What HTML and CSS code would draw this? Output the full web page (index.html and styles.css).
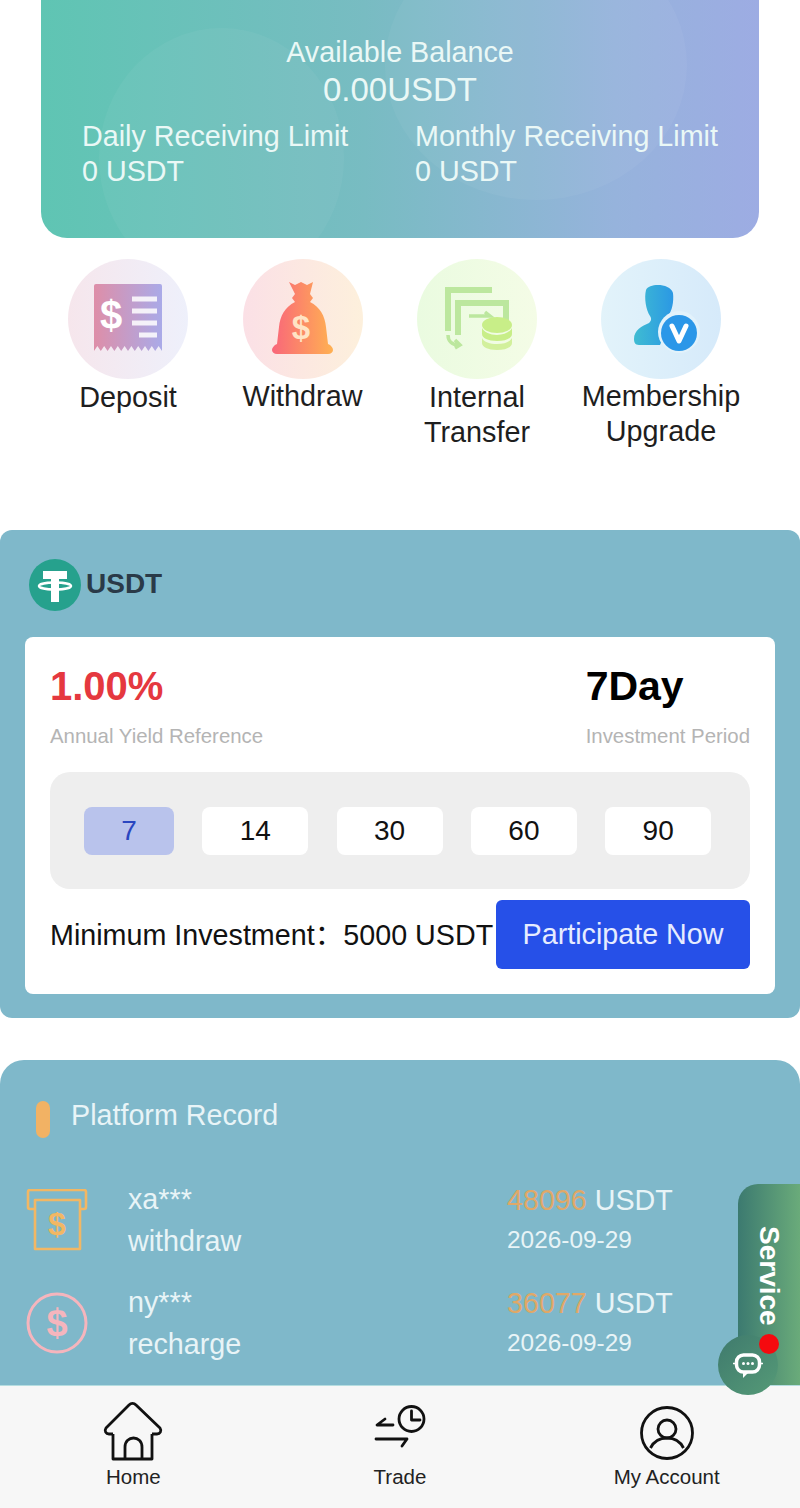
FILE: index.html
```html
<!DOCTYPE html>
<html lang="en">
<head>
  <meta charset="UTF-8" />
  <title>Wallet Home</title>
  <link rel="stylesheet" href="styles.css">
</head>
<body>
  <div class="page">
    <div class="content">
      <div class="hero">
        <div class="balance-label">Available Balance</div>
        <div class="balance-value">0.00USDT</div>
        <div class="limits">
          <div>Daily Receiving Limit<br>0 USDT</div>
          <div>Monthly Receiving Limit<br>0 USDT</div>
        </div>
      </div>

      <div class="actions">
        <div class="action action-low">
          <svg class="action-icon" viewBox="0 0 120 120">
            <defs>
              <linearGradient id="depBg"><stop offset="0" stop-color="#f6e6ec"/><stop offset="1" stop-color="#eef0fb"/></linearGradient>
              <linearGradient id="depFg"><stop offset="0" stop-color="#de8ea8"/><stop offset="1" stop-color="#aaaae8"/></linearGradient>
            </defs>
            <circle cx="60" cy="60" r="60" fill="url(#depBg)"/>
            <path d="M28 25h64a2 2 0 0 1 2 2v65l-3.400-5-3.400 5-3.400-5-3.400 5-3.400-5-3.400 5-3.400-5-3.400 5-3.400-5-3.400 5-3.400-5-3.400 5-3.400-5-3.400 5-3.400-5-3.400 5-3.400-5-3.400 5-3.400-5-3.400 5V27a2 2 0 0 1 2-2z" fill="url(#depFg)"/>
            <text class="icon-dollar" x="43" y="70" text-anchor="middle" font-size="40">$</text>
            <path d="M64 40h25M64 52h25M64 64h25M71 76h18" stroke="#fff" stroke-width="5" opacity=".85"/>
          </svg>
          <div>Deposit</div>
        </div>
        <div class="action">
          <svg class="action-icon" viewBox="0 0 120 120">
            <defs>
              <linearGradient id="wdBg"><stop offset="0" stop-color="#fbe0e6"/><stop offset="1" stop-color="#fdf0dc"/></linearGradient>
              <linearGradient id="wdFg"><stop offset="0" stop-color="#f9667a"/><stop offset="1" stop-color="#ffb152"/></linearGradient>
            </defs>
            <circle cx="60" cy="60" r="60" fill="url(#wdBg)"/>
            <g transform="translate(-2 0)">
              <path d="M48 23l6 3 6-3 6 3 6-3-3 12 3 4-3 4c10 5 15 14 16 25l2 17c3 1 5 4 5 6s-2 4-5 4H36c-3 0-5-2-5-4s2-5 5-6l2-17c1-11 6-20 16-25l-3-4 3-4z" fill="url(#wdFg)"/>
              <text class="icon-dollar dollar-peach" x="60" y="80" text-anchor="middle" font-size="33">$</text>
            </g>
          </svg>
          <div>Withdraw</div>
        </div>
        <div class="action action-lower">
          <svg class="action-icon" viewBox="0 0 120 120">
            <defs>
              <linearGradient id="trBg"><stop offset="0" stop-color="#eafbe0"/><stop offset="1" stop-color="#f4fce6"/></linearGradient>
            </defs>
            <circle cx="60" cy="60" r="60" fill="url(#trBg)"/>
            <g fill="none" stroke="#bce79e" stroke-width="6">
              <path d="M75 31H31v41"/>
              <path d="M89 62V44H41v32"/>
              <path d="M31 76c0 6 4 10 11 10M38 81l5 5-5 3" stroke-width="3.500"/>
              <path d="M52 57h20M68 53l5 4-5 0" stroke-width="3.500"/>
            </g>
            <ellipse cx="80" cy="66" rx="15" ry="8" fill="#c8ee88"/>
            <path d="M65 69v6c0 4 6 7 15 7s15-3 15-7v-6c-2 4-8 7-15 7s-13-3-15-7z" fill="#c8ee88"/>
            <path d="M65 79v5c0 4 6 7 15 7s15-3 15-7v-5c-2 4-8 6-15 6s-13-2-15-6z" fill="#d2f09c"/>
          </svg>
          <div>Internal<br>Transfer</div>
        </div>
        <div class="action">
          <svg class="action-icon" viewBox="0 0 120 120">
            <defs>
              <linearGradient id="memBg"><stop offset="0" stop-color="#e2f3fa"/><stop offset="1" stop-color="#d6eafa"/></linearGradient>
              <linearGradient id="memFg"><stop offset="0" stop-color="#3fbcd2"/><stop offset="1" stop-color="#2b98e4"/></linearGradient>
            </defs>
            <circle cx="60" cy="60" r="60" fill="url(#memBg)"/>
            <path d="M45 31c3-7 24-7 27 3 1 9-1 18-5 23-1 3 0 5 2 7l-10 22H38c-4 0-5-3-5-6 0-9 8-13 15-16 2-2 3-4 1-7-4-6-6-18-4-26z" fill="url(#memFg)"/>
            <circle cx="78" cy="73" r="21" fill="#e2f2fb"/>
            <circle cx="78" cy="74" r="18" fill="#2b97e8"/>
            <path d="M71 67l7 15 7-15" fill="none" stroke="#fff" stroke-width="5" stroke-linecap="round" stroke-linejoin="round"/>
          </svg>
          <div>Membership<br>Upgrade</div>
        </div>
      </div>

      <div class="product">
        <div class="product-head">
          <svg class="coin" viewBox="0 0 52 52">
            <circle cx="26" cy="26" r="26" fill="#26a18d"/>
            <path d="M14 12h24v8h-8v3h-8v-3h-8zM22 22h8v21h-8z" fill="#fff"/>
            <ellipse cx="26" cy="27" rx="16" ry="3.500" fill="none" stroke="#fff" stroke-width="2.500"/>
          </svg>
          <span>USDT</span>
        </div>
        <div class="product-card">
          <div class="stats">
            <div>
              <div class="stat-big red">1.00%</div>
              <div class="stat-small">Annual Yield Reference</div>
            </div>
            <div>
              <div class="stat-big stat-day">7Day</div>
              <div class="stat-small">Investment Period</div>
            </div>
          </div>
          <div class="periods">
            <div class="period period-on">7</div>
            <div class="period">14</div>
            <div class="period">30</div>
            <div class="period">60</div>
            <div class="period">90</div>
          </div>
          <div class="join">
            <div class="join-text">Minimum Investment：5000 USDT</div>
            <button class="join-btn">Participate Now</button>
          </div>
        </div>
      </div>

      <div class="records">
        <div class="records-title"><span class="pill"></span>Platform Record</div>
        <div class="record">
          <svg class="record-icon" viewBox="0 0 62 62">
            <g fill="none" stroke="#f2b764" stroke-width="2.600" stroke-linejoin="round">
              <path d="M9 20H4a2 2 0 0 1-2-2V3a2 2 0 0 1 2-2h54a2 2 0 0 1 2 2v15a2 2 0 0 1-2 2h-4"/>
              <path d="M9 11h45v49H9z"/>
            </g>
            <text class="icon-dollar dollar-orange" x="31" y="46" text-anchor="middle" font-size="32">$</text>
          </svg>
          <div class="record-who">xa***<br>withdraw</div>
          <div class="record-amt"><span class="orange">48096</span> USDT<div class="record-date">2026-09-29</div></div>
        </div>
        <div class="record">
          <svg class="record-icon" viewBox="0 0 62 62">
            <circle cx="31" cy="31" r="29" fill="none" stroke="#f5b5bd" stroke-width="3"/>
            <text class="icon-dollar dollar-pink" x="31" y="44" text-anchor="middle" font-size="38">$</text>
          </svg>
          <div class="record-who">ny***<br>recharge</div>
          <div class="record-amt"><span class="orange">36077</span> USDT<div class="record-date">2026-09-29</div></div>
        </div>
      </div>
    </div>

    <div class="nav">
      <div class="nav-item">
        <svg class="nav-icon" viewBox="0 0 64 64">
          <path d="M12 33v25h39V33M12 33H8c-3 0-5-3-3-6L28 4c2-2 5-2 7 0l24 23c2 3 0 6-3 6h-5M24 58V46c0-12 17-12 17 0v12" fill="none" stroke="#111" stroke-width="2.800" stroke-linejoin="round"/>
        </svg>
        <div>Home</div>
      </div>
      <div class="nav-item">
        <svg class="nav-icon" viewBox="0 0 64 64">
          <circle cx="43.500" cy="18" r="12.500" fill="none" stroke="#111" stroke-width="2.800"/>
          <path d="M43.500 10v9H52M25 24H9l8-6M8 38h31l-5 7" fill="none" stroke="#111" stroke-width="2.800" stroke-linecap="round" stroke-linejoin="round"/>
        </svg>
        <div>Trade</div>
      </div>
      <div class="nav-item">
        <svg class="nav-icon" viewBox="0 0 64 64">
          <circle cx="32" cy="32" r="25.500" fill="none" stroke="#111" stroke-width="2.800"/>
          <circle cx="32" cy="28" r="9" fill="none" stroke="#111" stroke-width="2.800"/>
          <path d="M15.500 47c3-6 9-10 16.500-10s13.500 4 16.500 10" fill="none" stroke="#111" stroke-width="2.800"/>
        </svg>
        <div>My Account</div>
      </div>
    </div>

    <div class="service">
      <div class="service-tab">Service</div>
      <div class="service-bot">
        <svg viewBox="0 0 30 30" width="30" height="30">
          <rect x="3.500" y="5" width="23" height="17" rx="7" fill="none" stroke="#fff" stroke-width="3.500"/>
          <path d="M0 13.500h4M26 13.500h4" stroke="#fff" stroke-width="1.500"/>
          <path d="M10 21v7l6-6z" fill="#fff"/>
          <circle cx="10.500" cy="13.500" r="1.500" fill="#fff"/>
          <circle cx="15" cy="13.500" r="1.500" fill="#fff"/>
          <circle cx="19.500" cy="13.500" r="1.500" fill="#fff"/>
        </svg>
      </div>
      <div class="service-dot"></div>
    </div>
  </div>
</body>
</html>
```

FILE: styles.css
```css
* {
  box-sizing: border-box;
}
body {
  margin: 0;
  background: #fff;
  font-family: "Liberation Sans", Arial, "Noto Sans CJK SC", sans-serif;
  color: #222;
}
.page {
  position: relative;
  height: 1508px;
  display: flex;
  flex-direction: column;
  overflow: hidden;
}
.content {
  flex: 1;
  min-height: 0;
  overflow: hidden;
}

/* balance card */
.hero {
  position: relative;
  overflow: hidden;
  height: 238px;
  margin: 0 41px;
  padding: 34px 41px 0;
  border-radius: 0 0 26px 26px;
  background: linear-gradient(90deg, #5fc5b3 0%, #78bcc2 45%, #96b3dc 80%, #9dace3 100%);
  color: #eaf8f6;
  font-size: 28.700px;
  line-height: 35px;
  text-align: center;
}
.hero::before,
.hero::after {
  content: "";
  position: absolute;
  border-radius: 50%;
  background: rgba(255, 255, 255, 0.045);
}
.hero::before {
  left: 58px;
  top: 28px;
  width: 245px;
  height: 260px;
}
.hero::after {
  left: 344px;
  top: -70px;
  width: 302px;
  height: 270px;
}
.balance-label,
.balance-value,
.limits {
  position: relative;
  z-index: 1;
}
.balance-label {
  height: 36px;
  line-height: 36px;
}
.balance-value {
  font-size: 33px;
  line-height: 40px;
}
.limits {
  display: grid;
  grid-template-columns: 333px 1fr;
  margin-top: 9px;
  text-align: left;
  white-space: nowrap;
}

/* quick actions */
.actions {
  display: grid;
  grid-template-columns: 174px 175px 174px 194px;
  margin: 21px 41px 0;
  height: 271px;
  font-size: 28.800px;
  line-height: 35px;
  text-align: center;
  color: #1e1e1e;
}
.action-icon {
  display: block;
  width: 120px;
  height: 120px;
  margin: 0 auto 0;
}
.action-low > div {
  margin-top: 1px;
}
.action-lower > div {
  margin-top: 1px;
}
.icon-dollar {
  font-family: "Liberation Sans", Arial, sans-serif;
  font-weight: 700;
  fill: #fff;
}
.dollar-peach {
  fill: #ffe3c4;
}
.dollar-orange {
  fill: #f2b764;
}
.dollar-pink {
  fill: #f5b5bd;
}

/* product card */
.product {
  height: 488px;
  padding: 0 25px;
  background: #7fb8ca;
  border-radius: 12px;
}
.product-head {
  display: flex;
  align-items: center;
  gap: 5px;
  height: 107px;
  padding: 3px 0 0 4px;
  font-size: 28px;
  font-weight: 700;
  color: #2a3a48;
}
.product-head span {
  margin-top: -3px;
}
.coin {
  width: 52px;
  height: 52px;
}
.product-card {
  height: 357px;
  padding: 24px 25px 0;
  background: #fff;
  border-radius: 8px;
}
.stats {
  display: flex;
  justify-content: space-between;
}
.stat-big {
  font-size: 40px;
  font-weight: 700;
  line-height: 50px;
  color: #000;
}
.stat-day {
  font-size: 41px;
}
.stat-big.red {
  color: #e5383f;
}
.stat-small {
  margin-top: 13px;
  font-size: 20.400px;
  line-height: 25px;
  color: #b4b4b4;
}
.periods {
  display: flex;
  gap: 28.300px;
  align-items: center;
  height: 117px;
  margin-top: 23px;
  padding-left: 34px;
  background: #eee;
  border-radius: 20px;
}
.period {
  width: 106px;
  height: 48px;
  line-height: 48px;
  background: #fff;
  border-radius: 8px;
  font-size: 28px;
  text-align: center;
  color: #111;
}
.period-on {
  width: 90px;
  background: #b9c3ec;
  color: #2a46c0;
}
.join {
  display: flex;
  justify-content: space-between;
  align-items: center;
  margin-top: 11px;
  font-size: 28.700px;
  color: #111;
  white-space: nowrap;
}
.join-text {
  margin-bottom: 4px;
}
.join-btn {
  width: 254px;
  height: 69px;
  padding: 0;
  border: none;
  border-radius: 6px;
  background: #2650e8;
  color: #e6ecff;
  font-family: inherit;
  font-size: 28.700px;
}

/* records */
.records {
  margin-top: 42px;
  height: 325px;
  padding: 0 0 0 26px;
  background: #7fb8ca;
  border-radius: 24px 24px 0 0;
  color: #e8f4f7;
  font-size: 28.700px;
}
.records-title {
  display: flex;
  align-items: center;
  gap: 21px;
  height: 111px;
  margin-bottom: -2px;
  padding-left: 10px;
}
.pill {
  width: 14px;
  height: 37px;
  margin-top: 8px;
  border-radius: 7px;
  background: #f2b264;
}
.record {
  display: grid;
  grid-template-columns: 102px 379px auto;
  align-items: center;
  height: 102.500px;
  line-height: 42px;
}
.record-icon {
  width: 62px;
  height: 62px;
}
.record-amt {
  margin-bottom: 2px;
  line-height: 42px;
}
.orange {
  color: #e0a868;
}
.record-date {
  font-size: 24.400px;
  line-height: 38px;
}

/* bottom nav */
.nav {
  display: grid;
  grid-template-columns: repeat(3, 1fr);
  height: 123px;
  padding-top: 15px;
  background: #f7f7f7;
  border-top: 1px solid #b5dde0;
  font-size: 20.500px;
  line-height: 24px;
  text-align: center;
  color: #222;
}
.nav-icon {
  display: block;
  width: 64px;
  height: 64px;
  margin: 0 auto;
}

/* floating service button */
.service {
  position: absolute;
  left: 718px;
  top: 1184px;
  width: 82px;
  height: 212px;
}
.service-tab {
  position: absolute;
  right: 0;
  top: 0;
  width: 62px;
  height: 201px;
  padding-top: 42px;
  border-radius: 20px 0 0 0;
  background: linear-gradient(90deg, #3c7a70, #6aab7a);
  color: #fff;
  font-size: 28px;
  font-weight: 700;
  line-height: 62px;
  writing-mode: vertical-rl;
}
.service-bot {
  position: absolute;
  left: 0;
  top: 151px;
  width: 60px;
  height: 60px;
  display: flex;
  align-items: center;
  justify-content: center;
  border-radius: 50%;
  background: linear-gradient(135deg, #3f7a6d, #559a77);
}
.service-dot {
  position: absolute;
  left: 41px;
  top: 150px;
  width: 20px;
  height: 20px;
  border-radius: 50%;
  background: #f50a0f;
}
```
